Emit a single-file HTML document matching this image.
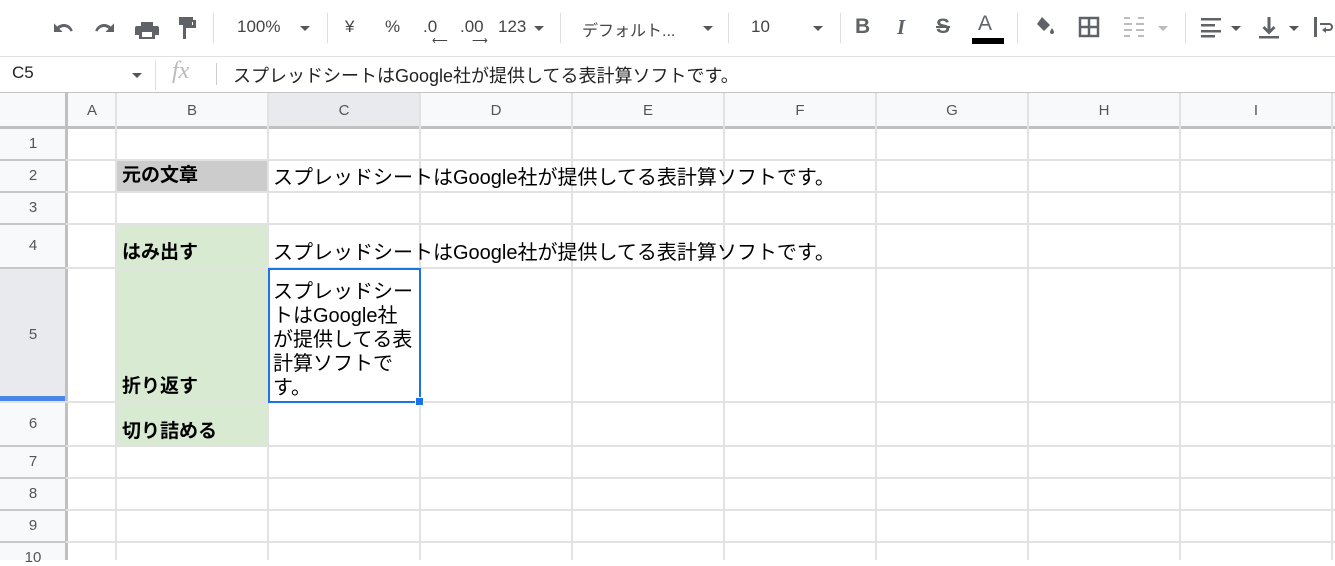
<!DOCTYPE html>
<html><head><meta charset="utf-8"><style>
*{margin:0;padding:0;box-sizing:border-box}
body{width:1335px;height:560px;overflow:hidden;background:#fff;font-family:"Liberation Sans","Noto Sans CJK JP",sans-serif;position:relative;color:#000}
.a{position:absolute}
.tb{color:#444;font-size:17px}
.sep{position:absolute;top:13px;width:1px;height:30px;background:#dadce0}
.tri{position:absolute;width:0;height:0;border-left:5px solid transparent;border-right:5px solid transparent;border-top:5px solid #555}
.vl{position:absolute;width:2px;background:#e2e2e2}
.hl{position:absolute;height:2px;background:#e2e2e2}
.ch{position:absolute;top:93px;height:35px;line-height:35px;text-align:center;color:#555;font-size:15px}
.rh{position:absolute;left:0;width:66px;text-align:center;color:#555;font-size:15px}
.t{position:absolute;font-size:20px;line-height:24px;white-space:nowrap}
.b{font-weight:bold}
</style></head><body>
<!-- toolbar -->
<svg class="a" style="left:52px;top:15px" width="120" height="26" viewBox="0 0 120 26" fill="#5f6368">
<path d="M12 9c-2.6 0-5 1-6.8 2.6L2 8.4V17h8.6l-3.2-3.2C8.8 12.6 10.4 12 12 12c3 0 5.4 1.9 6.4 4.5l2.4-.8C19.5 11.9 16 9 12 9z"/>
<path d="M52 9c2.6 0 5 1 6.8 2.6L62 8.4V17h-8.6l3.2-3.2C55.2 12.6 53.6 12 52 12c-3 0-5.4 1.9-6.4 4.5l-2.4-.8C44.5 11.9 48 9 52 9z"/>
<path d="M89 7h12v4H89zM85 11h20a2 2 0 0 1 2 2v7h-4v4H87v-4h-4v-7a2 2 0 0 1 2-2zm5 6v5h10v-5z"/>
<path d="M122 0"/>
</svg>
<svg class="a" style="left:175px;top:15px" width="26" height="26" viewBox="0 0 26 26" fill="#5f6368"><path d="M4 2h14v3h3v8h-10v11h-3V10h10V7h-1v3H4z"/></svg>
<div class="sep" style="left:213px"></div>
<div class="a tb" style="left:237px;top:17px">100%</div><div class="tri" style="left:300px;top:26px"></div>
<div class="sep" style="left:327px"></div>
<div class="a tb" style="left:345px;top:17px">¥</div>
<div class="a tb" style="left:385px;top:17px">%</div>
<div class="a tb" style="left:423px;top:17px">.0</div><div class="a" style="left:432px;top:34px;font-size:11px;color:#444">⟵</div>
<div class="a tb" style="left:460px;top:17px">.00</div><div class="a" style="left:472px;top:34px;font-size:11px;color:#444">⟶</div>
<div class="a tb" style="left:498px;top:17px">123</div><div class="tri" style="left:534px;top:26px"></div>
<div class="sep" style="left:560px"></div>
<div class="a tb" style="left:582px;top:17px;font-size:16px">デフォルト...</div><div class="tri" style="left:703px;top:26px"></div>
<div class="sep" style="left:728px"></div>
<div class="a tb" style="left:751px;top:17px">10</div><div class="tri" style="left:813px;top:26px"></div>
<div class="sep" style="left:840px"></div>
<div class="a" style="left:855px;top:15px;font-size:21px;font-weight:bold;color:#5f6368">B</div>
<div class="a" style="left:897px;top:15px;font-size:21px;font-style:italic;font-weight:bold;color:#5f6368;font-family:'Liberation Serif',serif">I</div>
<div class="a" style="left:936px;top:15px;font-size:21px;font-weight:bold;color:#5f6368;text-decoration:line-through">S</div>
<div class="a" style="left:978px;top:12px;font-size:21px;color:#5f6368">A</div><div class="a" style="left:972px;top:38px;width:32px;height:6px;background:#000"></div>
<div class="sep" style="left:1017px"></div>
<svg class="a" style="left:1032px;top:14px" width="26" height="26" viewBox="0 0 26 26" fill="#5f6368"><path d="M10 3l8 8-6 6-7-7zM20 14s2 3 2 4a2 2 0 0 1-4 0c0-1 2-4 2-4z"/></svg>
<svg class="a" style="left:1078px;top:16px" width="22" height="22" viewBox="0 0 22 22" fill="none" stroke="#5f6368" stroke-width="2.5"><rect x="2" y="2" width="18" height="18"/><path d="M11 2v18M2 11h18"/></svg>
<svg class="a" style="left:1122px;top:16px" width="24" height="22" viewBox="0 0 24 22" fill="none" stroke="#bdbdbd" stroke-width="2"><path d="M2 2h6M16 2h6M2 20h6M16 20h6M2 8h8M14 8h8M2 14h8M14 14h8"/></svg><div class="tri" style="left:1158px;top:26px;border-top-color:#bbb"></div>
<div class="sep" style="left:1185px"></div>
<svg class="a" style="left:1200px;top:16px" width="24" height="22" viewBox="0 0 24 22" fill="#5f6368"><rect x="1" y="2" width="20" height="2.5"/><rect x="1" y="8" width="14" height="2.5"/><rect x="1" y="14" width="20" height="2.5"/><rect x="1" y="19" width="14" height="2.5"/></svg><div class="tri" style="left:1231px;top:26px"></div>
<svg class="a" style="left:1258px;top:15px" width="22" height="24" viewBox="0 0 22 24" fill="#5f6368"><path d="M9.5 2h3v12l3-3 2 2-6.5 6.5L4.5 13l2-2 3 3z"/><rect x="1" y="21" width="20" height="2.5"/></svg><div class="tri" style="left:1289px;top:26px"></div>
<svg class="a" style="left:1313px;top:16px" width="22" height="22" viewBox="0 0 22 22" fill="#5f6368"><rect x="1" y="1" width="3" height="20"/><path d="M7 9h9a2 2 0 0 1 0 4h-3v-2l-4 3 4 3v-2h3a4 4 0 0 0 0-8H7z"/></svg>
<div class="a" style="left:0;top:56px;width:1335px;height:1px;background:#e0e0e0"></div>
<!-- formula bar -->
<div class="a" style="left:12px;top:63px;font-size:17px;color:#222">C5</div>
<div class="tri" style="left:132px;top:73px"></div>
<div class="a" style="left:155px;top:60px;width:1px;height:30px;background:#e0e0e0"></div>
<div class="a" style="left:172px;top:58px;font-size:24px;font-style:italic;color:#bbb;font-family:'Liberation Serif',serif">fx</div>
<div class="a" style="left:216px;top:63px;width:1px;height:22px;background:#ccc"></div>
<div class="a" style="left:233px;top:62px;font-size:18px;color:#222;white-space:nowrap">スプレッドシートはGoogle社が提供してる表計算ソフトです。</div>
<!-- grid header bg -->
<div class="a" style="left:0;top:92px;width:1335px;height:36px;background:#f8f9fa;border-top:1px solid #c4c4c4"></div>
<div class="a" style="left:0;top:128px;width:66px;height:432px;background:#f8f9fa"></div>
<div class="a" style="left:268px;top:93px;width:152px;height:35px;background:#e8eaed"></div>
<div class="a" style="left:0;top:268px;width:66px;height:134px;background:#e8eaed"></div>
<div class="a" style="left:0;top:396px;width:68px;height:5px;background:#4a86e8"></div>
<!-- fills -->
<div class="a" style="left:116px;top:160px;width:152px;height:32px;background:#cccccc"></div>
<div class="a" style="left:116px;top:224px;width:152px;height:222px;background:#d9ead3"></div>
<!-- gridlines -->
<div class="a" style="left:0;top:126px;width:1335px;height:3px;background:#c0c0c0"></div>
<div class="a" style="left:65px;top:93px;width:3px;height:467px;background:#c0c0c0"></div>
<div class="vl" style="left:115px;top:93px;height:467px"></div>
<div class="vl" style="left:267px;top:93px;height:467px"></div>
<div class="vl" style="left:419px;top:93px;height:467px"></div>
<div class="vl" style="left:571px;top:93px;height:467px"></div>
<div class="vl" style="left:723px;top:93px;height:467px"></div>
<div class="vl" style="left:875px;top:93px;height:467px"></div>
<div class="vl" style="left:1027px;top:93px;height:467px"></div>
<div class="vl" style="left:1179px;top:93px;height:467px"></div>
<div class="vl" style="left:1331px;top:93px;height:467px"></div>
<div class="hl" style="left:0;top:159px;width:1335px"></div>
<div class="hl" style="left:0;top:191px;width:1335px"></div>
<div class="hl" style="left:0;top:223px;width:1335px"></div>
<div class="hl" style="left:0;top:267px;width:1335px"></div>
<div class="hl" style="left:0;top:401px;width:1335px"></div>
<div class="hl" style="left:0;top:445px;width:1335px"></div>
<div class="hl" style="left:0;top:477px;width:1335px"></div>
<div class="hl" style="left:0;top:509px;width:1335px"></div>
<div class="hl" style="left:0;top:541px;width:1335px"></div>
<!-- row header lines -->
<div class="a" style="left:0;top:159px;width:66px;height:2px;background:#c8c8c8"></div>
<div class="a" style="left:0;top:191px;width:66px;height:2px;background:#c8c8c8"></div>
<div class="a" style="left:0;top:223px;width:66px;height:2px;background:#c8c8c8"></div>
<div class="a" style="left:0;top:267px;width:66px;height:2px;background:#c8c8c8"></div>
<div class="a" style="left:0;top:445px;width:66px;height:2px;background:#c8c8c8"></div>
<div class="a" style="left:0;top:477px;width:66px;height:2px;background:#c8c8c8"></div>
<div class="a" style="left:0;top:509px;width:66px;height:2px;background:#c8c8c8"></div>
<div class="a" style="left:0;top:541px;width:66px;height:2px;background:#c8c8c8"></div>
<!-- column headers -->
<div class="ch" style="left:68px;width:48px">A</div>
<div class="ch" style="left:116px;width:152px">B</div>
<div class="ch" style="left:268px;width:152px">C</div>
<div class="ch" style="left:420px;width:152px">D</div>
<div class="ch" style="left:572px;width:152px">E</div>
<div class="ch" style="left:724px;width:152px">F</div>
<div class="ch" style="left:876px;width:152px">G</div>
<div class="ch" style="left:1028px;width:152px">H</div>
<div class="ch" style="left:1180px;width:152px">I</div>
<!-- row headers -->
<div class="rh" style="top:135px">1</div>
<div class="rh" style="top:167px">2</div>
<div class="rh" style="top:199px">3</div>
<div class="rh" style="top:237px">4</div>
<div class="rh" style="top:326px">5</div>
<div class="rh" style="top:415px">6</div>
<div class="rh" style="top:453px">7</div>
<div class="rh" style="top:485px">8</div>
<div class="rh" style="top:517px">9</div>
<div class="rh" style="top:549px">10</div>
<!-- cells -->
<div class="t b" style="left:122px;top:164px;font-size:19px">元の文章</div>
<div class="t" style="left:273px;top:166px">スプレッドシートはGoogle社が提供してる表計算ソフトです。</div>
<div class="t b" style="left:122px;top:241px;font-size:19px">はみ出す</div>
<div class="t" style="left:273px;top:241px">スプレッドシートはGoogle社が提供してる表計算ソフトです。</div>
<div class="t b" style="left:122px;top:375px;font-size:19px">折り返す</div>
<div class="t b" style="left:122px;top:420px;font-size:19px">切り詰める</div>
<div class="t" style="left:273px;top:280px;white-space:normal;width:144px;line-height:24px">スプレッドシー<br>トはGoogle社<br>が提供してる表<br>計算ソフトで<br>す。</div>
<!-- selection -->
<div class="a" style="left:268px;top:268px;width:153px;height:135px;border:2px solid #1a73e8"></div>
<div class="a" style="left:415px;top:397px;width:9px;height:9px;background:#1a73e8;border:1px solid #fff"></div>
</body></html>
